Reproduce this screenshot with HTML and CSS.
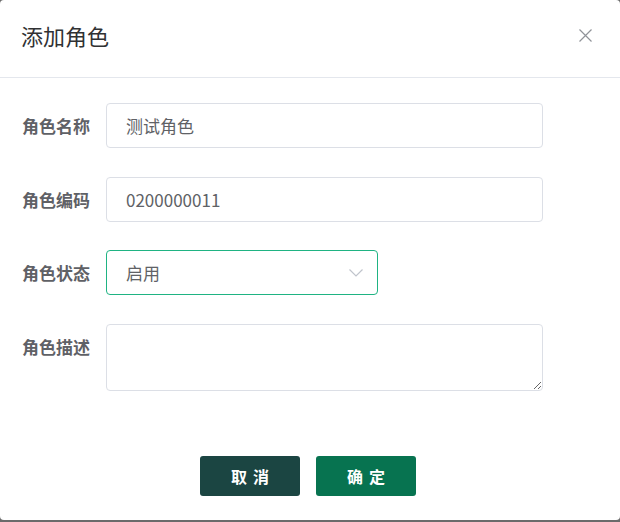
FILE: index.html
```html
<!DOCTYPE html>
<html lang="zh-CN">
<head>
<meta charset="utf-8">
<link rel="stylesheet" href="styles.css">
</head>
<body>
<div class="dialog">
  <div class="dialog-header">
    <span class="dialog-title">添加角色</span>
    <span class="dialog-close">
      <svg width="13" height="13" viewBox="0 0 13 13"><path d="M0.5 0.5 L12.5 12.5 M12.5 0.5 L0.5 12.5" stroke="#909399" stroke-width="1.2" fill="none"/></svg>
    </span>
  </div>
  <div class="dialog-body">
    <div class="form">
      <div class="form-row">
        <label class="form-label">角色名称</label>
        <div class="input"><span class="input-text">测试角色</span></div>
      </div>
      <div class="form-row">
        <label class="form-label">角色编码</label>
        <div class="input"><span class="input-text">0200000011</span></div>
      </div>
      <div class="form-row">
        <label class="form-label">角色状态</label>
        <div class="input select">
          <span class="input-text">启用</span>
          <svg class="chevron" width="14" height="8" viewBox="0 0 14 8"><path d="M0.5 0.5 L7 7 L13.5 0.5" stroke="#c0c4cc" stroke-width="1.2" fill="none"/></svg>
        </div>
      </div>
      <div class="form-row">
        <label class="form-label">角色描述</label>
        <textarea class="textarea"></textarea>
      </div>
    </div>
  </div>
  <div class="dialog-footer">
    <button class="btn btn-cancel">取消</button>
    <button class="btn btn-confirm">确定</button>
  </div>
</div>
</body>
</html>
```

FILE: styles.css
```css
html, body {
  margin: 0;
  padding: 0;
  background: #6b6b6b;
}
body {
  width: 620px;
  height: 522px;
  font-family: "Noto Sans CJK SC", "Noto Sans", sans-serif;
}
.dialog {
  width: 620px;
  height: 520px;
  background: #fff;
  border-radius: 4px;
  display: flex;
  flex-direction: column;
  box-sizing: border-box;
}
.dialog-header {
  height: 77px;
  border-bottom: 1px solid #e4e7ed;
  display: flex;
  align-items: center;
  justify-content: space-between;
  padding: 0 28px 0 21px;
  box-sizing: content-box;
}
.dialog-title {
  font-size: 22px;
  color: #303133;
  line-height: 1;
  margin-top: -7px;
}
.dialog-close {
  display: flex;
  margin-top: -7px;
}
.dialog-body {
  padding: 25px 0 0 22px;
}
.form {
  display: flex;
  flex-direction: column;
  gap: 28.6px;
}
.form-row {
  display: flex;
  align-items: flex-start;
}
.form-label {
  width: 84px;
  flex: none;
  font-size: 17px;
  font-weight: bold;
  color: #5f6166;
  line-height: 45px;
}
.input {
  width: 437px;
  height: 45px;
  box-sizing: border-box;
  border: 1px solid #dcdfe6;
  border-radius: 4px;
  display: flex;
  align-items: center;
  padding: 0 19px;
}
.input-text {
  font-size: 17px;
  color: #606266;
}
.select {
  width: 272px;
  border-color: #1fb383;
  justify-content: space-between;
  padding-right: 14px;
}
.chevron {
  display: block;
}
.textarea {
  width: 437px;
  height: 67px;
  box-sizing: border-box;
  border: 1px solid #dcdfe6;
  border-radius: 4px;
  margin: 0;
  padding: 6px 19px;
  font-family: inherit;
  font-size: 17px;
  resize: vertical;
  outline: none;
}
.dialog-footer {
  margin-top: auto;
  padding-bottom: 24px;
  display: flex;
  justify-content: center;
  gap: 16px;
  padding-right: 4px;
}
.btn {
  width: 100px;
  height: 40px;
  border: none;
  border-radius: 3px;
  color: #fff;
  font-family: inherit;
  font-size: 16px;
  font-weight: bold;
  letter-spacing: 6px;
  padding: 0 0 0 6px;
  cursor: pointer;
}
.btn-cancel {
  background: #1b4542;
}
.btn-confirm {
  background: #077350;
}
```
